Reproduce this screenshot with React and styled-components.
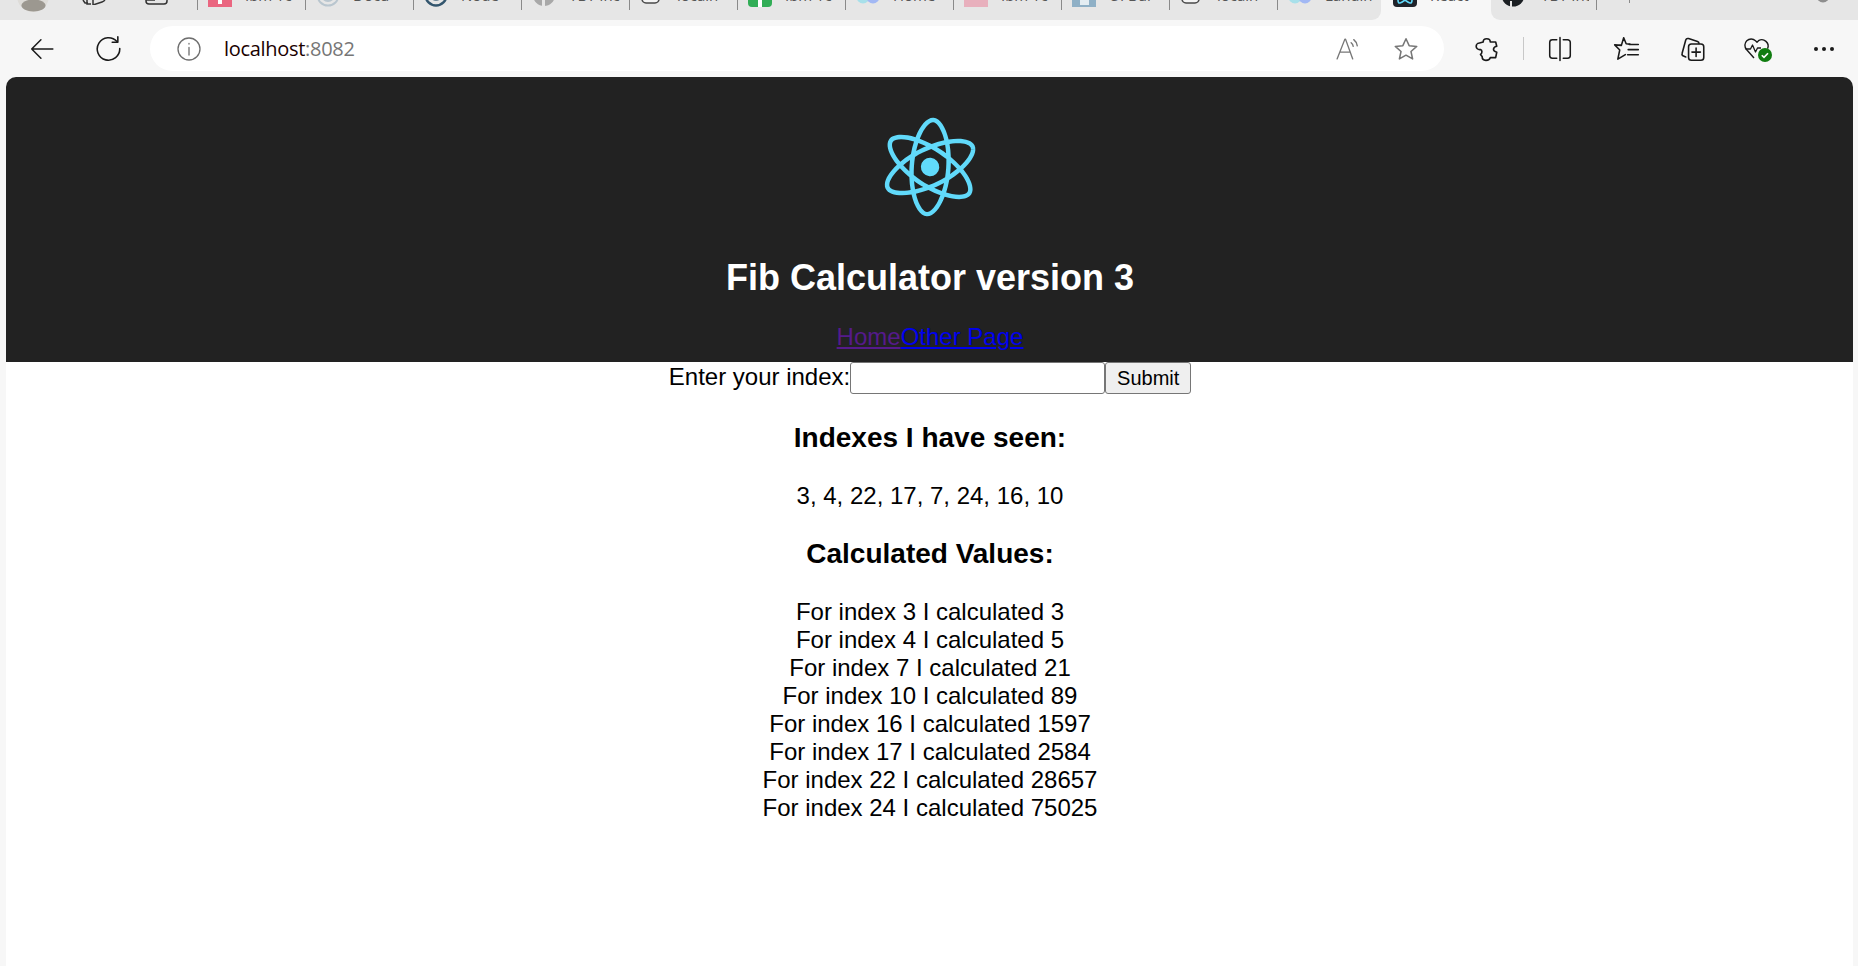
import styled, { createGlobalStyle } from "styled-components";

const GlobalStyle = createGlobalStyle`
  html, body {
    margin: 0;
    height: 100%;
    background: #f7f7f7;
    overflow: hidden;
  }
  #root {
    height: 100%;
  }
`;

const Browser = styled.div`
  display: flex;
  flex-direction: column;
  height: 966px;
  background: #f7f7f7;
`;

const TabStrip = styled.div`
  display: flex;
  height: 20px;
  overflow: hidden;
  flex: none;
`;

const StripSegment = styled.div`
  display: flex;
  background: #e6e6e6;
  height: 20px;
  width: ${(p) => p.$width}px;
  flex: ${(p) => (p.$grow ? "1" : "none")};
  border-bottom-left-radius: ${(p) => (p.$roundLeft ? "9px" : "0")};
  border-bottom-right-radius: ${(p) => (p.$roundRight ? "9px" : "0")};
`;

const ProfileArea = styled.div`
  display: flex;
  width: 197px;
  flex: none;
  padding-left: 17px;
  box-sizing: border-box;
`;

const StripIcon = styled.svg`
  flex: none;
  margin-top: ${(p) => p.$top}px;
  margin-left: ${(p) => p.$left || 0}px;
`;

const Tab = styled.div`
  display: flex;
  width: ${(p) => p.$width || 108}px;
  flex: none;
  padding-left: ${(p) => p.$pad || 11}px;
  box-sizing: border-box;
  position: relative;
  ${(p) =>
    p.$divider &&
    `&::before {
      content: "";
      position: absolute;
      left: 0;
      top: 0;
      width: 1px;
      height: ${p.$divider}px;
      background: #8a8a8a;
    }`}
`;

const TabTitle = styled.span`
  margin: -14px 0 0 ${(p) => p.$gap || 13}px;
  font: 15px/18px "Open Sans", sans-serif;
  color: #555;
  white-space: nowrap;
  overflow: hidden;
  width: ${(p) => p.$width || 52}px;
`;

const Toolbar = styled.div`
  display: flex;
  align-items: center;
  height: 57px;
  flex: none;
  padding: 0 0 0 9px;
`;

const ToolButton = styled.div`
  display: flex;
  align-items: center;
  justify-content: center;
  width: ${(p) => p.$width || 66}px;
  flex: none;
  color: #1a1a1a;
`;

const AddressBar = styled.div`
  display: flex;
  align-items: center;
  width: 1294px;
  height: 45px;
  margin: 0 10px 0 9px;
  padding: 0 25px 0 27px;
  box-sizing: border-box;
  background: #fff;
  border-radius: 23px;
  flex: none;
`;

const Url = styled.div`
  flex: 1;
  margin-left: 23px;
  font: 20px "Open Sans", sans-serif;
  color: #1a0000;
  letter-spacing: -0.3px;
`;

const Port = styled.span`
  color: #767676;
`;

const AddressIcons = styled.div`
  display: flex;
  align-items: center;
  gap: 33px;
`;

const Divider = styled.div`
  width: 1px;
  height: 23px;
  background: #c8c8c8;
  flex: none;
  margin: 0 2px 0 3px;
`;

const Viewport = styled.div`
  flex: 1;
  margin: 0 5px 0 6px;
  background: #fff;
  border-radius: 10px 10px 0 0;
  overflow: hidden;
  text-align: center;
  font: 24px/28px "Liberation Sans", Arial, sans-serif;
  color: #000;
`;

const Header = styled.header`
  display: flex;
  flex-direction: column;
  align-items: center;
  height: 285px;
  padding: 30px 0 0 1px;
  box-sizing: border-box;
  background: #222;
  color: #fff;
`;

const Logo = styled.svg`
  display: block;
  height: 120px;
  margin-bottom: 5px;
  transform: rotate(94deg);
  flex: none;
`;

const Title = styled.h1`
  margin: 25px 0;
  font-size: 36px;
  line-height: 41px;
  font-weight: bold;
`;

const Nav = styled.nav`
  display: flex;
  justify-content: center;
`;

const NavLink = styled.a`
  color: ${(p) => (p.$visited ? "#551a8b" : "#0000ee")};
  text-decoration: underline;
`;

const Content = styled.main`
  padding-left: 1px;
`;

const Form = styled.form`
  display: flex;
  justify-content: center;
  align-items: baseline;
  margin: 0;
`;

const Input = styled.input`
  width: 255px;
  height: 32px;
  box-sizing: border-box;
  padding: 1px 3px;
  border: 1px solid #767676;
  border-radius: 3px;
  background: #fff;
  font: 20px "Liberation Sans", Arial, sans-serif;
`;

const SubmitButton = styled.button`
  width: 86px;
  height: 32px;
  box-sizing: border-box;
  padding: 0;
  border: 1px solid #767676;
  border-radius: 3px;
  background: #efefef;
  color: #000;
  font: 20px "Liberation Sans", Arial, sans-serif;
`;

const Heading = styled.h3`
  margin: 28px 0;
  font-size: 28px;
  line-height: 32px;
  font-weight: bold;
`;

const ResultRow = styled.div`
  line-height: 28px;
`;

const tabs = [
  { icon: "pink", title: "Ibm Tc" },
  { icon: "ring", title: "Docu" },
  { icon: "node", title: "Node" },
  { icon: "globe", title: "YBT Inc" },
  { icon: "doc", title: "localh" },
  { icon: "green", title: "Ibm Tc" },
  { icon: "blobs", title: "Home" },
  { icon: "rose", title: "Ibm Tc" },
  { icon: "steel", title: "UI Bui" },
  { icon: "doc", title: "localh" },
  { icon: "blobs", title: "Landin" },
];

const indexes = [3, 4, 22, 17, 7, 24, 16, 10];

const values = [
  [3, 3],
  [4, 5],
  [7, 21],
  [10, 89],
  [16, 1597],
  [17, 2584],
  [22, 28657],
  [24, 75025],
];

function Favicon({ kind }) {
  return (
    <StripIcon width="24" height="24" viewBox="0 0 24 24" $top={-17}>
      {kind === "pink" && <rect width="24" height="24" fill="#ea6680" />}
      {kind === "pink" && <rect x="10" y="15" width="4" height="6" fill="#fff" />}
      {kind === "rose" && <rect width="24" height="24" fill="#e8b0bd" />}
      {kind === "steel" && <rect width="24" height="24" fill="#8fb0c6" />}
      {kind === "steel" && <rect x="8" y="17" width="9" height="5" fill="#e4edf2" />}
      {kind === "green" && <rect width="24" height="24" rx="4" fill="#31ad56" />}
      {kind === "green" && <rect x="10" y="12" width="4" height="12" fill="#fff" />}
      {kind === "ring" && <circle cx="12" cy="12" r="10.5" fill="#e6e6e6" stroke="#b9c6cf" strokeWidth="2" />}
      {kind === "ring" && <circle cx="12" cy="12" r="6" fill="none" stroke="#b9c6cf" strokeWidth="2" />}
      {kind === "node" && <circle cx="12" cy="12" r="10.5" fill="#e6e6e6" stroke="#33566e" strokeWidth="2.5" />}
      {kind === "node" && <circle cx="12" cy="12" r="6" fill="#6d8798" />}
      {kind === "globe" && <circle cx="12" cy="12" r="11" fill="#a8a8a8" />}
      {kind === "globe" && <rect x="10" y="14" width="3" height="10" fill="#e6e6e6" />}
      {kind === "doc" && <rect x="2" y="-4" width="17" height="24" rx="4" fill="#f4f4f4" stroke="#4a4a4a" strokeWidth="1.5" />}
      {kind === "blobs" && <circle cx="7" cy="14" r="6.5" fill="#a8e0ea" />}
      {kind === "blobs" && <circle cx="17" cy="14" r="6.5" fill="#a2b8f4" />}
    </StripIcon>
  );
}

function ReactGlyph() {
  return (
    <g fill="#61DAFB">
      <path d="M666.3 296.5c0-32.5-40.7-63.3-103.1-82.4 14.4-63.6 8-114.2-20.2-130.4-6.5-3.8-14.1-5.6-22.4-5.6v22.3c4.6 0 8.3.9 11.4 2.6 13.6 7.8 19.5 37.5 14.9 75.7-1.1 9.4-2.9 19.3-5.1 29.4-19.6-4.8-41-8.5-63.5-10.9-13.5-18.5-27.5-35.3-41.6-50 32.6-30.3 63.2-46.9 84-46.9V78c-27.5 0-63.5 19.6-99.9 53.6-36.4-33.8-72.4-53.2-99.9-53.2v22.3c20.7 0 51.4 16.5 84 46.6-14 14.7-28 31.4-41.3 49.9-22.6 2.4-44 6.1-63.6 11-2.3-10-4-19.7-5.2-29-4.7-38.2 1.1-67.9 14.6-75.8 3-1.8 6.9-2.6 11.5-2.6V78.5c-8.4 0-16 1.8-22.6 5.6-28.1 16.2-34.4 66.7-19.9 130.1-62.2 19.2-102.7 49.9-102.7 82.3 0 32.5 40.7 63.3 103.1 82.4-14.4 63.6-8 114.2 20.2 130.4 6.5 3.8 14.1 5.6 22.5 5.6 27.5 0 63.5-19.6 99.9-53.6 36.4 33.8 72.4 53.2 99.9 53.2 8.4 0 16-1.8 22.6-5.6 28.1-16.2 34.4-66.7 19.9-130.1 62-19.1 102.5-49.9 102.5-82.3zm-130.2-66.7c-3.7 12.9-8.3 26.2-13.5 39.5-4.1-8-8.4-16-13.1-24-4.6-8-9.5-15.8-14.4-23.4 14.2 2.1 27.9 4.7 41 7.9zm-45.8 106.5c-7.8 13.5-15.8 26.3-24.1 38.2-14.9 1.3-30 2-45.2 2-15.1 0-30.2-.7-45-1.9-8.3-11.9-16.4-24.6-24.2-38-7.6-13.1-14.5-26.4-20.8-39.8 6.2-13.4 13.2-26.8 20.7-39.9 7.8-13.5 15.8-26.3 24.1-38.2 14.9-1.3 30-2 45.2-2 15.1 0 30.2.7 45 1.9 8.3 11.9 16.4 24.6 24.2 38 7.6 13.1 14.5 26.4 20.8 39.8-6.3 13.4-13.2 26.8-20.7 39.9zm32.3-13c5.4 13.4 10 26.8 13.8 39.8-13.1 3.2-26.9 5.9-41.2 8 4.9-7.7 9.8-15.6 14.4-23.7 4.6-8 8.9-16.1 13-24.1zM421.2 430c-9.3-9.6-18.6-20.3-27.8-32 9 .4 18.2.7 27.5.7 9.4 0 18.7-.2 27.8-.7-9 11.7-18.3 22.4-27.5 32zm-74.4-58.9c-14.2-2.1-27.9-4.7-41-7.9 3.7-12.9 8.3-26.2 13.5-39.5 4.1 8 8.4 16 13.1 24 4.7 8 9.5 15.8 14.4 23.4zM420.7 163c9.3 9.6 18.6 20.3 27.8 32-9-.4-18.2-.7-27.5-.7-9.4 0-18.7.2-27.8.7 9-11.7 18.3-22.4 27.5-32zm-74 58.9c-4.9 7.7-9.8 15.6-14.4 23.7-4.6 8-8.9 16-13 24-5.4-13.4-10-26.8-13.8-39.8 13.1-3.1 26.9-5.8 41.2-7.9zm-90.5 125.2c-35.4-15.1-58.3-34.9-58.3-50.6 0-15.7 22.9-35.6 58.3-50.6 8.6-3.7 18-7 27.7-10.1 5.7 19.6 13.2 40 22.5 60.9-9.2 20.8-16.6 41.1-22.2 60.6-9.9-3.1-19.3-6.5-28-10.2zM310 490c-13.6-7.8-19.5-37.5-14.9-75.7 1.1-9.4 2.9-19.3 5.1-29.4 19.6 4.8 41 8.5 63.5 10.9 13.5 18.5 27.5 35.3 41.6 50-32.6 30.3-63.2 46.9-84 46.9-4.5-.1-8.3-1-11.3-2.7zm237.2-76.2c4.7 38.2-1.1 67.9-14.6 75.8-3 1.8-6.9 2.6-11.5 2.6-20.7 0-51.4-16.5-84-46.6 14-14.7 28-31.4 41.3-49.9 22.6-2.4 44-6.1 63.6-11 2.3 10.1 4.1 19.8 5.2 29.1zm38.5-66.7c-8.6 3.7-18 7-27.7 10.1-5.7-19.6-13.2-40-22.5-60.9 9.2-20.8 16.6-41.1 22.2-60.6 9.9 3.1 19.3 6.5 28.1 10.2 35.4 15.1 58.3 34.9 58.3 50.6-.1 15.7-23 35.6-58.4 50.6zM320.8 78.4z" />
      <circle cx="420.9" cy="296.5" r="45.7" />
    </g>
  );
}

// toolbar glyphs share a 24 box, thin outline like the Edge ones
function Glyph({ size = 24, stroke = "#1a1a1a", width = 1.5, children }) {
  return (
    <svg width={size} height={size} viewBox="0 0 24 24" fill="none" stroke={stroke} strokeWidth={width} strokeLinecap="round" strokeLinejoin="round">
      {children}
    </svg>
  );
}

export default function App() {
  return (
    <Browser>
      <GlobalStyle />
      <TabStrip>
        <StripSegment $width={1381} $roundRight>
          <ProfileArea>
            <StripIcon width="32" height="32" viewBox="0 0 32 32" $top={-20}>
              <circle cx="16" cy="16" r="16" fill="#dedcd8" />
              <ellipse cx="16.500" cy="25.500" rx="12" ry="6" fill="#9c9890" />
            </StripIcon>
            <StripIcon width="24" height="24" viewBox="0 0 24 24" $top={-19} $left={33} fill="none" stroke="#333" strokeWidth="1.5">
              <path d="M1 19l2 3h3M5 19v4h4" />
              <path d="M11 18v6l9-3q3-1 3-3v-3" />
            </StripIcon>
            <StripIcon width="24" height="24" viewBox="0 0 24 24" $top={-19} $left={39} fill="none" stroke="#333" strokeWidth="1.5">
              <rect x="1" y="8" width="21" height="15" rx="3" />
              <path d="M1 19h9" />
            </StripIcon>
          </ProfileArea>
          {tabs.map((tab, i) => (
            <Tab key={i} $divider={10}>
              <Favicon kind={tab.icon} />
              <TabTitle>{tab.title}</TabTitle>
            </Tab>
          ))}
        </StripSegment>
        <Tab $width={110} $pad={12}>
          <StripIcon width="24" height="24" viewBox="0 0 24 24" $top={-17}>
            <rect width="24" height="24" rx="4" fill="#20232a" />
            <path d="M5 17c0-5 3-3 7 0s7 5 7 0-3-3-7 0-7 5-7 0z" fill="none" stroke="#61dafb" strokeWidth="1.6" />
          </StripIcon>
          <TabTitle>React</TabTitle>
        </Tab>
        <StripSegment $grow $roundLeft>
          <Tab $width={105} $pad={10}>
            <StripIcon width="24" height="24" viewBox="0 0 24 24" $top={-17}>
              <circle cx="12" cy="12" r="11.5" fill="#1b1f23" />
              <path d="M9 24v-6h2v6z" fill="#e6e6e6" />
            </StripIcon>
            <TabTitle $gap={16} $width={48}>YBT Inc</TabTitle>
          </Tab>
          <Tab $width={33} $divider={10} />
          <Tab $width={187} $pad={1} $divider={3} />
          <StripIcon width="14" height="14" viewBox="0 0 14 14" $top={-11}>
            <circle cx="7" cy="7" r="6.5" fill="#8e8e8e" />
          </StripIcon>
        </StripSegment>
      </TabStrip>

      <Toolbar>
        <ToolButton>
          <Glyph size={26} width={1.4}>
            <path d="M22 12H2.500M11 3.500L2.500 12l8.500 8.500" />
          </Glyph>
        </ToolButton>
        <ToolButton>
          <Glyph size={27} width={1.4}>
            <path d="M19.500 5.800A10 10 0 1 0 22 12" />
            <path d="M20.300 1.500v5h-5" />
          </Glyph>
        </ToolButton>
        <AddressBar>
          <Glyph size={24} stroke="#6e6e6e" width={1.3}>
            <circle cx="12" cy="12" r="11" />
            <path d="M12 10.500V18M12 6.400v.6" />
          </Glyph>
          <Url>
            localhost<Port>:8082</Port>
          </Url>
          <AddressIcons>
            <Glyph size={25} stroke="#777" width={1.3}>
              <path d="M2 22L9.500 3h.6L17 22M4.800 15.500h10" />
              <path d="M15.500 6.500c1.200 1 1.800 2 2 3.400M18 3.500c2 1.600 3.200 3.600 3.400 6" />
            </Glyph>
            <Glyph size={26} stroke="#777" width={1.4}>
              <path d="M12 2.500l2.900 6.400 7 .7-5.300 4.700 1.500 6.900-6.100-3.500-6.100 3.500 1.500-6.900-5.300-4.700 7-.7z" />
            </Glyph>
          </AddressIcons>
        </AddressBar>
        <ToolButton>
          <Glyph size={26} width={1.5}>
            <path d="M8.500 5.500C8.500 1.500 15 1.500 15 5.500L20 5.500L21 9.500C18.500 10 18 11 18 12.500C18 14 19.500 14.500 21 15L20 20L15 20C15 20 14.500 22.500 11 22.500C8 22.500 7.500 20 7.500 19L6 17C8 15.500 7.500 13 6 12.500C3.500 13 2 11 2 9.500C2 8 3.500 6.500 5 6.500z" />
          </Glyph>
        </ToolButton>
        <Divider />
        <ToolButton $width={67}>
          <Glyph size={26} width={1.4}>
            <path d="M9 3.500H5A2.500 2.500 0 0 0 2.500 6v12A2.500 2.500 0 0 0 5 20.500h4M15 3.500h4A2.500 2.500 0 0 1 21.500 6v12a2.500 2.500 0 0 1-2.500 2.500h-4M12 1.500v21" />
          </Glyph>
        </ToolButton>
        <ToolButton>
          <Glyph size={27} width={1.4}>
            <path d="M9.500 2.500l2.200 5.300 3.300.3M1.500 8.800l6 .4M9.500 2.500L7.500 9 1.500 8.800l4.500 4.500-1.700 8.200 6.700-4" />
            <path d="M14.500 8.500h8M13.500 13h9M13 17.500h9.500" />
          </Glyph>
        </ToolButton>
        <ToolButton>
          <Glyph size={27} width={1.4}>
            <path d="M6 19.500l-2-.8a2 2 0 0 1-1.200-2.500L6 4.500A2 2 0 0 1 8.500 3.200l8 2.600a2 2 0 0 1 1.300 1.700" />
            <rect x="8.500" y="8" width="13.500" height="14.500" rx="2.500" />
            <path d="M15.200 11.500v7.500M11.500 15.200H19" />
          </Glyph>
        </ToolButton>
        <ToolButton>
          <svg width="30" height="28" viewBox="0 0 30 28" fill="none">
            <path d="M11 23L3.500 14.500a6.300 6.300 0 0 1 9-8.800l1.500 1.500 1.500-1.500a6.300 6.300 0 0 1 9 8" stroke="#1a1a1a" strokeWidth="1.400" strokeLinejoin="round" />
            <path d="M2.500 14h5l2-4 3 7 2-4h3.500" stroke="#1a1a1a" strokeWidth="1.300" strokeLinejoin="round" />
            <circle cx="22" cy="20" r="7" fill="#107c10" />
            <path d="M18.800 20.200l2.200 2.200 4-4.200" stroke="#fff" strokeWidth="1.600" />
          </svg>
        </ToolButton>
        <ToolButton>
          <svg width="22" height="6" viewBox="0 0 22 6">
            <circle cx="3" cy="3" r="2" fill="#1a1a1a" />
            <circle cx="11" cy="3" r="2" fill="#1a1a1a" />
            <circle cx="19" cy="3" r="2" fill="#1a1a1a" />
          </svg>
        </ToolButton>
      </Toolbar>

      <Viewport>
        <Header>
          <Logo viewBox="0 0 841.9 595.3">
            <ReactGlyph />
          </Logo>
          <Title>Fib Calculator version 3</Title>
          <Nav>
            <NavLink href="#" $visited>
              Home
            </NavLink>
            <NavLink href="#">Other Page</NavLink>
          </Nav>
        </Header>
        <Content>
          <Form onSubmit={(e) => e.preventDefault()}>
            <label htmlFor="index">Enter your index:</label>
            <Input id="index" type="text" />
            <SubmitButton type="submit">Submit</SubmitButton>
          </Form>
          <Heading>Indexes I have seen:</Heading>
          <ResultRow>{indexes.join(", ")}</ResultRow>
          <Heading>Calculated Values:</Heading>
          {values.map(([index, value]) => (
            <ResultRow key={index}>
              For index {index} I calculated {value}
            </ResultRow>
          ))}
        </Content>
      </Viewport>
    </Browser>
  );
}
